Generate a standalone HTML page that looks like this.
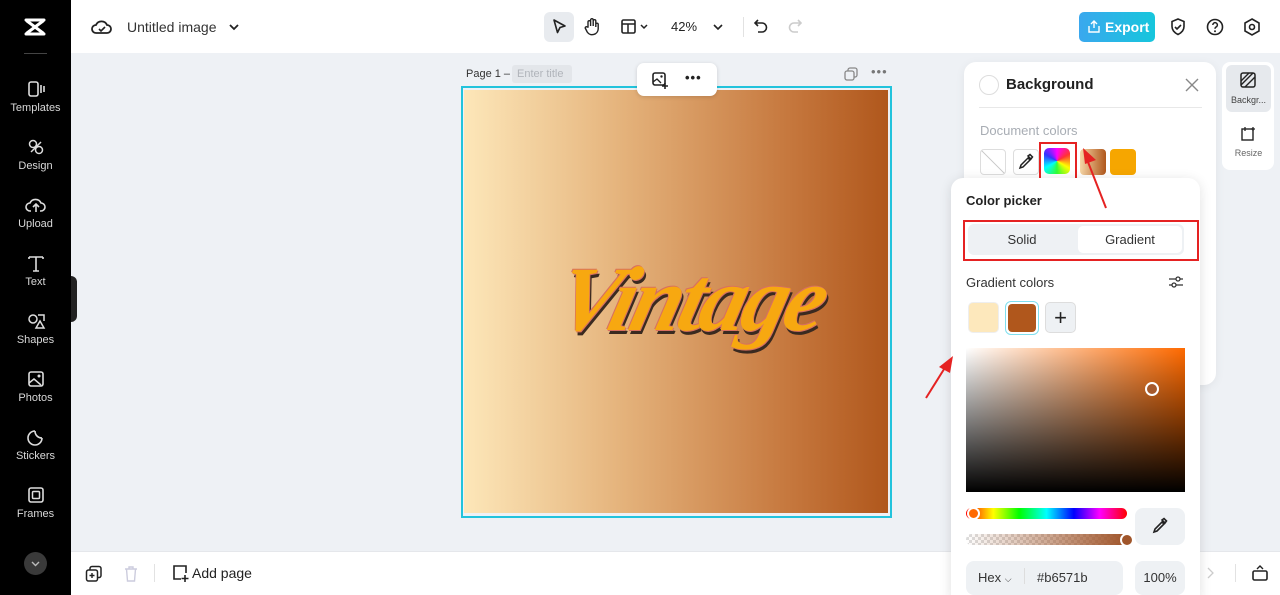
<!DOCTYPE html>
<html><head><meta charset="utf-8"><style>
*{box-sizing:border-box;margin:0;padding:0}
html,body{width:1280px;height:595px;overflow:hidden}
body{background:#eef1f5;font-family:"Liberation Sans",sans-serif;position:relative;color:#1f2329}
.abs{position:absolute}
.side{left:0;top:0;width:71px;height:595px;background:#000;color:#ddd}
.si{position:absolute;left:0;width:71px;text-align:center;font-size:11px;color:#d8d8d8}
.si svg{display:block;margin:0 auto 3px}
.top{left:71px;top:0;width:1209px;height:53px;background:#fff}
.bot{left:71px;top:551px;width:1209px;height:44px;background:#fff;border-top:1px solid #e5e7eb}
.sw{position:absolute;width:26px;height:26px;border-radius:4px}
</style></head><body>
<div class="abs side">
  <svg class="abs" style="left:22px;top:16px" width="26" height="22" viewBox="0 0 26 22"><path d="M4 4h18M4 18h18M5 5l16 12M21 5L5 17" fill="none" stroke="#fff" stroke-width="3" stroke-linecap="round"/></svg>
  <div class="abs" style="left:24px;top:53px;width:23px;height:1px;background:#444"></div>
  <div class="si" style="top:79px"><svg width="20" height="20" viewBox="0 0 20 18"><rect x="3" y="2" width="9" height="14" rx="2" fill="none" stroke="#ddd" stroke-width="1.6"/><path d="M15 5v8M18 6v6" stroke="#ddd" stroke-width="1.6"/></svg>Templates</div>
  <div class="si" style="top:137px"><svg width="20" height="20" viewBox="0 0 20 18"><circle cx="7" cy="6" r="3.5" fill="none" stroke="#ddd" stroke-width="1.5"/><circle cx="13" cy="12" r="3.5" fill="none" stroke="#ddd" stroke-width="1.5"/><path d="M5 14l10-10" stroke="#ddd" stroke-width="1.5"/></svg>Design</div>
  <div class="si" style="top:195px"><svg width="22" height="20" viewBox="0 0 22 18"><path d="M6 15H5a4 4 0 010-8 6 6 0 0111 0 4 4 0 010 8h-1M11 16V9M8 11l3-3 3 3" fill="none" stroke="#ddd" stroke-width="1.6"/></svg>Upload</div>
  <div class="si" style="top:253px"><svg width="20" height="20" viewBox="0 0 20 18"><path d="M3 3h14M10 3v14M3 3v2M17 3v2M7 17h6" stroke="#ddd" stroke-width="1.6" fill="none"/></svg>Text</div>
  <div class="si" style="top:311px"><svg width="20" height="20" viewBox="0 0 20 18"><circle cx="7" cy="7" r="4" fill="none" stroke="#ddd" stroke-width="1.5"/><path d="M12 3h6v6M10 16l4-7 4 7z" fill="none" stroke="#ddd" stroke-width="1.5"/></svg>Shapes</div>
  <div class="si" style="top:369px"><svg width="20" height="20" viewBox="0 0 20 18"><rect x="3" y="2" width="14" height="14" rx="2" fill="none" stroke="#ddd" stroke-width="1.6"/><path d="M3 13l5-4 7 6" fill="none" stroke="#ddd" stroke-width="1.5"/><circle cx="13" cy="6" r="1.5" fill="#ddd"/></svg>Photos</div>
  <div class="si" style="top:427px"><svg width="20" height="20" viewBox="0 0 20 18"><path d="M16 10A7 7 0 119 3M9 3c0 4 3 7 7 7" fill="none" stroke="#ddd" stroke-width="1.6"/></svg>Stickers</div>
  <div class="si" style="top:485px"><svg width="20" height="20" viewBox="0 0 20 18"><rect x="3" y="2" width="14" height="14" rx="2" fill="none" stroke="#ddd" stroke-width="1.6"/><rect x="6.5" y="5.5" width="7" height="7" rx="1" fill="none" stroke="#ddd" stroke-width="1.5"/></svg>Frames</div>
  <div class="abs" style="left:24px;top:552px;width:23px;height:23px;border-radius:50%;background:#3a3a3a"><svg width="23" height="23" viewBox="0 0 23 23"><path d="M8 10l3.5 3.5L15 10" fill="none" stroke="#bbb" stroke-width="1.4"/></svg></div>
  <div class="abs" style="left:71px;top:276px;width:6px;height:46px;background:#222;border-radius:0 6px 6px 0"></div>
</div>
<div class="abs top">
  <svg class="abs" style="left:20px;top:18px" width="22" height="18" viewBox="0 0 22 18"><path d="M6 15H5a4 4 0 010-8 6 6 0 0111 0 4 4 0 010 8H6z" fill="none" stroke="#222" stroke-width="1.8"/><path d="M8 11l2 2 4-4" fill="none" stroke="#222" stroke-width="1.6"/></svg>
  <div class="abs" style="left:56px;top:19px;font-size:14px;color:#333">Untitled image</div>
  <svg class="abs" style="left:157px;top:22px" width="12" height="10"><path d="M2 3l4 4 4-4" fill="none" stroke="#222" stroke-width="1.8"/></svg>
  <div class="abs" style="left:473px;top:12px;width:30px;height:30px;background:#e8ebef;border-radius:6px"></div>
  <svg class="abs" style="left:480px;top:18px" width="16" height="18"><path d="M3 2l11 6-5 1.5-2.5 5z" fill="none" stroke="#222" stroke-width="1.6" stroke-linejoin="round"/></svg>
  <svg class="abs" style="left:513px;top:17px" width="16" height="19"><path d="M4 10V5a1.3 1.3 0 012.6 0v4V3a1.3 1.3 0 012.6 0v6V4a1.3 1.3 0 012.6 0v6V7a1.3 1.3 0 012.4 0v5a6 6 0 01-11 3l-2-4a1.2 1.2 0 012-1z" fill="none" stroke="#222" stroke-width="1.4"/></svg>
  <svg class="abs" style="left:549px;top:18px" width="30" height="18"><rect x="2" y="2" width="13" height="13" rx="1.5" fill="none" stroke="#222" stroke-width="1.6"/><path d="M2 6h13M8 6v9" stroke="#222" stroke-width="1.5"/><path d="M21 7l3 3 3-3" fill="none" stroke="#222" stroke-width="1.5"/></svg>
  <div class="abs" style="left:600px;top:19px;font-size:13px;color:#222">42%</div>
  <svg class="abs" style="left:641px;top:22px" width="12" height="10"><path d="M2 3l4 4 4-4" fill="none" stroke="#222" stroke-width="1.6"/></svg>
  <div class="abs" style="left:672px;top:17px;width:1px;height:20px;background:#e2e2e2"></div>
  <svg class="abs" style="left:682px;top:18px" width="16" height="18"><path d="M5 2L2 5l3 3M2 5h7a4.5 4.5 0 010 9H5" fill="none" stroke="#222" stroke-width="1.6"/></svg>
  <svg class="abs" style="left:716px;top:18px" width="16" height="18"><path d="M11 2l3 3-3 3M14 5H7a4.5 4.5 0 000 9h4" fill="none" stroke="#ccc" stroke-width="1.6"/></svg>
  <div class="abs" style="left:1008px;top:12px;width:76px;height:30px;border-radius:5px;background:linear-gradient(90deg,#3aa8ee,#16c6dc);color:#fff;font-size:14px;font-weight:bold;line-height:30px;padding-left:26px">Export</div>
  <svg class="abs" style="left:1016px;top:19px" width="14" height="15"><path d="M7 9V2M4 5l3-3 3 3M2 7v6h10V7" fill="none" stroke="#fff" stroke-width="1.4"/></svg>
  <svg class="abs" style="left:1098px;top:17px" width="18" height="20"><path d="M9 2l6 2.5v5c0 4-3 6.5-6 8-3-1.5-6-4-6-8v-5z" fill="none" stroke="#222" stroke-width="1.6"/><path d="M6 10l2 2 4-4" fill="none" stroke="#222" stroke-width="1.6"/></svg>
  <svg class="abs" style="left:1135px;top:18px" width="18" height="18"><circle cx="9" cy="9" r="7.5" fill="none" stroke="#222" stroke-width="1.6"/><path d="M6.8 7a2.3 2.3 0 114 1.5c-1 .7-1.8 1-1.8 2.3" fill="none" stroke="#222" stroke-width="1.5"/><circle cx="9" cy="13.3" r="1" fill="#222"/></svg>
  <svg class="abs" style="left:1172px;top:17px" width="18" height="20"><path d="M9 2l7 4v8l-7 4-7-4V6z" fill="none" stroke="#222" stroke-width="1.6"/><circle cx="9" cy="10" r="2.5" fill="none" stroke="#222" stroke-width="1.6"/></svg>
</div>

<div class="abs" style="left:466px;top:68px;font-size:11px;color:#333">Page 1 –</div>
<div class="abs" style="left:512px;top:65px;width:60px;height:18px;background:#e3e6ea;border-radius:3px;font-size:11px;color:#b0b4ba;line-height:18px;padding-left:5px">Enter title</div>
<svg class="abs" style="left:844px;top:67px" width="14" height="14"><rect x="4" y="1" width="9" height="9" rx="2" fill="none" stroke="#888" stroke-width="1.3"/><rect x="1" y="4" width="9" height="9" rx="2" fill="#eef1f5" stroke="#888" stroke-width="1.3"/></svg>
<div class="abs" style="left:871px;top:64px;font-size:13px;color:#777;letter-spacing:1px">•••</div>

<div class="abs" style="left:461px;top:86px;width:431px;height:432px;border:2px solid #22c3dc"></div>
<div class="abs" style="left:464px;top:90px;width:424px;height:423px;background:linear-gradient(90deg,#fde7b9,#e6b67f 35%,#c77a40 75%,#b0571c)"></div>
<div class="abs" style="left:637px;top:63px;width:80px;height:33px;background:#fff;border-radius:7px;box-shadow:0 1px 4px rgba(0,0,0,.15)"></div>
<svg class="abs" style="left:651px;top:71px" width="18" height="18"><rect x="2" y="2" width="12" height="12" rx="2" fill="none" stroke="#222" stroke-width="1.6"/><path d="M2 11l4-3 4 4" fill="none" stroke="#222" stroke-width="1.4"/><circle cx="10.5" cy="5.5" r="1.2" fill="#222"/><path d="M14 12v6M11 15h6" stroke="#222" stroke-width="1.6"/></svg>
<div class="abs" style="left:685px;top:70px;font-size:13px;color:#222;letter-spacing:1px;font-weight:bold">•••</div>

<div class="abs" style="left:560px;top:246px;font-family:'Liberation Serif',serif;font-style:italic;font-weight:bold;font-size:92px;color:#f7a810;letter-spacing:-4px;transform:skewX(-14deg);text-shadow:-1px -1px 0 #d87060,1px 1px 0 #d87060,3px 4px 0 #3a2a20">Vintage</div>

<div class="abs bot">
  <svg class="abs" style="left:14px;top:13px" width="18" height="18"><rect x="5" y="1.5" width="11" height="11" rx="2" fill="none" stroke="#222" stroke-width="1.5"/><rect x="1.5" y="5" width="11" height="11" rx="2" fill="#fff" stroke="#222" stroke-width="1.5"/><path d="M7 8v5M4.5 10.5h5" stroke="#222" stroke-width="1.4"/></svg>
  <svg class="abs" style="left:52px;top:13px" width="16" height="18"><path d="M2 4h12M6 4V2h4v2M3.5 4l1 12h7l1-12" fill="none" stroke="#ccd" stroke-width="1.4"/></svg>
  <div class="abs" style="left:83px;top:12px;width:1px;height:18px;background:#e2e2e2"></div>
  <svg class="abs" style="left:100px;top:12px" width="18" height="19"><path d="M10 15H3V2h12v7" fill="none" stroke="#222" stroke-width="1.6"/><path d="M14 11v7M10.5 14.5h7" stroke="#222" stroke-width="1.6"/></svg>
  <div class="abs" style="left:121px;top:13px;font-size:14px;color:#222">Add page</div>
  <svg class="abs" style="left:1135px;top:14px" width="10" height="14"><path d="M2 2l5 5-5 5" fill="none" stroke="#ccc" stroke-width="1.3"/></svg>
  <div class="abs" style="left:1164px;top:12px;width:1px;height:18px;background:#e2e2e2"></div>
  <svg class="abs" style="left:1180px;top:12px" width="18" height="18"><rect x="2" y="7" width="14" height="9" rx="1.5" fill="none" stroke="#222" stroke-width="1.6"/><path d="M6 5l3-3 3 3" fill="none" stroke="#222" stroke-width="1.4"/></svg>
</div>

<!-- Background panel -->
<div class="abs" style="left:964px;top:62px;width:252px;height:323px;background:#fff;border-radius:12px;box-shadow:0 2px 10px rgba(0,0,0,.06)"></div>
<div class="abs" style="left:979px;top:75px;width:20px;height:20px;border-radius:50%;border:1.5px solid #ddd"></div>
<div class="abs" style="left:1006px;top:76px;font-size:15px;font-weight:bold;color:#222">Background</div>
<svg class="abs" style="left:1185px;top:78px" width="14" height="14"><path d="M1 1l12 12M13 1L1 13" stroke="#888" stroke-width="1.4"/></svg>
<div class="abs" style="left:979px;top:107px;width:223px;height:1px;background:#e8e8e8"></div>
<div class="abs" style="left:980px;top:123px;font-size:13px;color:#a8adb4">Document colors</div>
<div class="sw" style="left:980px;top:149px;border:1px solid #ddd;background:linear-gradient(45deg,#fff 48%,#ccc 49%,#ccc 51%,#fff 52%)"></div>
<div class="sw" style="left:1013px;top:149px;border:1px solid #ddd;background:#fff"></div>
<svg class="abs" style="left:1017px;top:153px" width="18" height="18"><path d="M3 15l1-3 7-7 2 2-7 7zM11 3l2-1.5 2.5 2.5L14 6z" fill="none" stroke="#222" stroke-width="1.5"/></svg>
<div class="sw" style="left:1044px;top:148px;background:conic-gradient(from 0deg,#f0f,#f33,#ff0,#3f3,#0ff,#33f,#f0f);border-radius:5px"></div>
<div class="abs" style="left:1039px;top:142px;width:38px;height:42px;border:2px solid #e52222"></div>
<div class="sw" style="left:1080px;top:149px;background:linear-gradient(90deg,#f6d6a6,#b0571c)"></div>
<div class="sw" style="left:1110px;top:149px;background:#f6a600"></div>

<!-- Right mini panel -->
<div class="abs" style="left:1222px;top:62px;width:52px;height:108px;background:#fff;border-radius:8px"></div>
<div class="abs" style="left:1226px;top:65px;width:45px;height:47px;background:#e6e9ed;border-radius:6px"></div>
<svg class="abs" style="left:1240px;top:72px" width="16" height="16"><rect x="1" y="1" width="14" height="14" rx="2" fill="none" stroke="#222" stroke-width="1.5"/><path d="M1 9l8-8M5 15l10-10M1 13L13 1" stroke="#222" stroke-width="1.4"/></svg>
<div class="abs" style="left:1226px;top:95px;width:45px;text-align:center;font-size:9px;color:#444">Backgr...</div>
<svg class="abs" style="left:1240px;top:126px" width="16" height="16"><rect x="2" y="3" width="11" height="11" fill="none" stroke="#222" stroke-width="1.4"/><path d="M5 1v4M13 1v4M11 3h4" stroke="#222" stroke-width="1.3"/></svg>
<div class="abs" style="left:1226px;top:148px;width:45px;text-align:center;font-size:9px;color:#666">Resize</div>

<!-- Color picker -->
<div class="abs" style="left:951px;top:178px;width:249px;height:430px;background:#fff;border-radius:12px;box-shadow:0 2px 12px rgba(0,0,0,.12)"></div>
<svg class="abs" style="left:1080px;top:140px" width="30" height="72"><path d="M26 68L8 22" stroke="#e52222" stroke-width="2"/><path d="M3 8l13 12-11 4z" fill="#e52222"/></svg>
<div class="abs" style="left:966px;top:193px;font-size:13px;font-weight:bold;color:#222">Color picker</div>
<div class="abs" style="left:968px;top:224px;width:216px;height:31px;background:#eef1f4;border-radius:6px"></div>
<div class="abs" style="left:1078px;top:226px;width:104px;height:27px;background:#fff;border-radius:5px"></div>
<div class="abs" style="left:968px;top:232px;width:108px;text-align:center;font-size:13px;color:#333">Solid</div>
<div class="abs" style="left:1078px;top:232px;width:104px;text-align:center;font-size:13px;color:#333">Gradient</div>
<div class="abs" style="left:963px;top:220px;width:236px;height:41px;border:2px solid #e52222"></div>
<div class="abs" style="left:966px;top:275px;font-size:13px;color:#333">Gradient colors</div>
<svg class="abs" style="left:1168px;top:274px" width="16" height="16"><path d="M1 5h14M1 11h14" stroke="#333" stroke-width="1.3"/><circle cx="10" cy="5" r="2" fill="#fff" stroke="#333" stroke-width="1.3"/><circle cx="6" cy="11" r="2" fill="#fff" stroke="#333" stroke-width="1.3"/></svg>
<div class="abs" style="left:968px;top:302px;width:31px;height:31px;background:#fde8bc;border:1px solid #eee;border-radius:5px"></div>
<div class="abs" style="left:1005px;top:301px;width:34px;height:34px;border:1.5px solid #7fdfee;border-radius:6px;padding:2px"><div style="width:100%;height:100%;background:#b0571c;border-radius:4px"></div></div>
<div class="abs" style="left:1045px;top:302px;width:31px;height:31px;background:#eef1f4;border:1px solid #ddd;border-radius:5px;text-align:center;font-size:22px;line-height:29px;color:#222">+</div>
<svg class="abs" style="left:920px;top:352px" width="36" height="48"><path d="M6 46L26 14" stroke="#e52222" stroke-width="2"/><path d="M33 4l-3 17-11-6z" fill="#e52222"/></svg>
<div class="abs" style="left:966px;top:348px;width:219px;height:144px;background:linear-gradient(to bottom,rgba(0,0,0,0),#000),linear-gradient(to right,#fff,#ff6a00)"></div>
<div class="abs" style="left:1145px;top:382px;width:14px;height:14px;border-radius:50%;border:2px solid #fff;background:#a65a2c"></div>
<div class="abs" style="left:966px;top:508px;width:161px;height:11px;border-radius:6px;background:linear-gradient(90deg,red,#ff0 17%,#0f0 33%,#0ff 50%,#00f 67%,#f0f 83%,red)"></div>
<div class="abs" style="left:967px;top:507px;width:13px;height:13px;border-radius:50%;border:2px solid #fff;background:#ff6a00"></div>
<div class="abs" style="left:966px;top:534px;width:161px;height:11px;border-radius:6px;background:linear-gradient(90deg,rgba(176,87,28,0),#a0552a),repeating-conic-gradient(#ddd 0 25%,#fff 0 50%) 0 0/6px 6px"></div>
<div class="abs" style="left:1120px;top:533px;width:14px;height:14px;border-radius:50%;border:2px solid #fff;background:#a0552a"></div>
<div class="abs" style="left:1135px;top:508px;width:50px;height:37px;background:#eef1f4;border-radius:8px"></div>
<svg class="abs" style="left:1151px;top:517px" width="18" height="18"><path d="M3 15l1-3 7-7 2 2-7 7zM11 3l2-1.5 2.5 2.5L14 6z" fill="none" stroke="#222" stroke-width="1.6"/></svg>
<div class="abs" style="left:966px;top:561px;width:157px;height:34px;background:#eef1f4;border-radius:8px"></div>
<div class="abs" style="left:978px;top:570px;font-size:13px;color:#333">Hex <span style="font-size:9px">⌵</span></div>
<div class="abs" style="left:1024px;top:568px;width:1px;height:16px;background:#ddd"></div>
<div class="abs" style="left:1037px;top:570px;font-size:13px;color:#333">#b6571b</div>
<div class="abs" style="left:1135px;top:561px;width:50px;height:34px;background:#eef1f4;border-radius:8px;text-align:center;font-size:13px;color:#333;padding-top:9px">100%</div>
</body></html>
